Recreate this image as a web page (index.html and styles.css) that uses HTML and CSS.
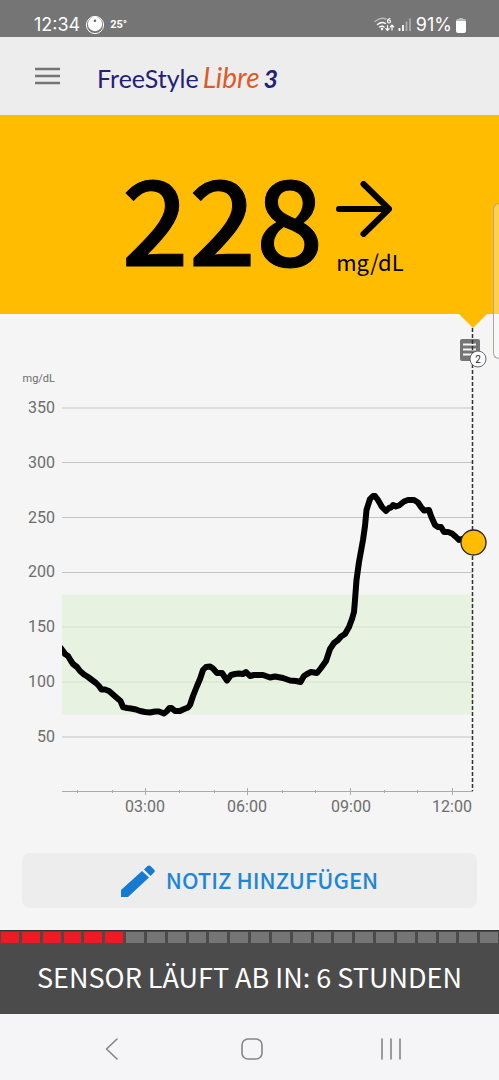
FILE: index.html
```html
<!DOCTYPE html>
<html lang="de">
<head>
<meta charset="utf-8">
<meta name="viewport" content="width=device-width, initial-scale=1">
<title>FreeStyle Libre 3</title>
<link rel="stylesheet" href="styles.css">
</head>
<body>
<div class="status">
  <div class="status-group">
    <span class="clock">12:34</span>
    <svg class="dial" width="20" height="20" viewBox="0 0 20 20" aria-hidden="true"><circle cx="10" cy="10" r="8.6" fill="none" stroke="#fff" stroke-width="1"/><circle cx="10" cy="9" r="7.2" fill="#fff"/><circle cx="10" cy="5.8" r="1.3" fill="#666"/></svg>
    <span class="temp">25°</span>
  </div>
  <div class="status-group status-right">
    <svg width="38" height="16" viewBox="0 0 38 16" aria-hidden="true">
      <g fill="none" stroke="#fff" stroke-linecap="round" stroke-width="1.4"><path d="M1 4.5Q6.500 -.5 12 2" opacity=".5"/><path d="M3.500 7.500Q7.500 4 11.500 6.500"/><path d="M5.500 10Q8 8.500 10 10"/><path d="M13.500 8.500v5m-1.700-1.800 1.700 1.800 1.700-1.800M18 13V8m-1.700 1.800L18 8l1.700 1.800" stroke-width="1.200"/><path d="M16 1.500Q13.500 2 13.500 4.500a1.500 1.500 0 1 0 1.500-1.500" stroke-width="1.200"/></g>
      <circle cx="8" cy="12" r="1.200" fill="#fff"/>
      <path d="M25.500 11v3M29 8v6" stroke="#fff" stroke-width="1.800"/><path d="M32.500 4.500V14M36 1.500V14" stroke="#fff" stroke-width="1.800" opacity=".4"/>
    </svg>
    <span class="clock">91%</span>
    <svg width="10" height="15" viewBox="0 0 10 15" aria-hidden="true"><path d="M3 0h4v1h1.500Q10 1 10 3H0q0-2 1.500-2H3z" fill="#fff" opacity=".5"/><path d="M0 3h10v10q0 2-2 2H2q-2 0-2-2z" fill="#fff"/></svg>
  </div>
</div>
<header class="appbar">
  <button class="menu" aria-label="Menü"><svg width="26" height="18" viewBox="0 0 26 18"><path d="M1 2h25M1 9h25M1 16h25" stroke="#757575" stroke-width="2.500"/></svg></button>
  <h1 class="logo"><span>FreeStyle</span><em class="libre">Libre</em><em class="version">3</em></h1>
</header>
<main>
  <section class="reading">
    <strong class="value">228</strong>
    <div class="trend">
      <svg width="56" height="56" viewBox="0 0 56 56" role="img" aria-label="Gleichbleibend"><path d="M3 28H53M27.500 3 53 28 27.500 53" fill="none" stroke="#000" stroke-width="6" stroke-linecap="round" stroke-linejoin="round"/></svg>
      <span>mg/dL</span>
    </div>
  </section>
  <svg class="chart" viewBox="0 314 499 512" role="img" aria-label="Glukoseverlauf">
    <path d="M459 314h28l-14 14z" fill="#ffbc00"/>
    <path d="M62 408h411M62 462.500h411M62 517.500h411M62 572.500h411M62 627h411M62 682h411M62 737h411" stroke="#c3c3c3"/>
    <path d="M62 594.500h411v120H62z" fill="#e1efd5" opacity=".65"/>
    <path d="M62 791.500h411M145.500 788v7M247.500 788v7M350.500 788v7M452.500 788v7M77.500 790v3M112.500 790v3M179.500 790v3M214.500 790v3M282.500 790v3M315.500 790v3M384.500 790v3M417.500 790v3" stroke="#aaa" fill="none"/>
    <g class="ylabels">
      <text class="unit" x="55" y="382">mg/dL</text>
      <text x="55" y="413">350</text><text x="55" y="468">300</text><text x="55" y="523">250</text><text x="55" y="577">200</text><text x="55" y="632">150</text><text x="55" y="687">100</text><text x="55" y="742">50</text>
    </g>
    <g class="xlabels"><text x="145" y="812">03:00</text><text x="247" y="812">06:00</text><text x="351" y="812">09:00</text><text x="452" y="812">12:00</text></g>
    <g><rect x="460" y="339" width="20" height="22" rx="2" fill="#757575"/><path d="M463 344.500h13M463 349.500h13M463 354.500h9" stroke="#f5f5f5" stroke-width="2"/></g>
    <path d="M472.500 328V791" stroke="#333" stroke-width="1.500" stroke-dasharray="4 2"/>
    <circle cx="478" cy="359" r="8" fill="#fff" stroke="#666"/>
    <text class="count" x="478" y="363">2</text>
    <clipPath id="plot"><path d="M62 400h420v391H62z"/></clipPath>
    <polyline clip-path="url(#plot)" fill="none" stroke="#000" stroke-width="6" stroke-linejoin="round" points="60,647 63,651 65,654 68,656 71,661 73,664 77,667 80,671 84,674.500 88,677 92,680 96,683 99,686 101.500,689.500 105,689.500 109,691 113,694.500 117,698 120.500,701 123,707 127,708 131,708.500 136,709.500 140,711 145,712 150,712.500 155,711.500 159,711.500 164,713.500 167,711 169.500,708 171.500,708 175,711 180,711 183,709.500 188,707.500 190,705 193,696 197,686 200,679 203,670 206,667 210,666.500 213,668.500 217,673 222,673 227,680.500 231,675 235,674 239,673.500 243,674 246,672 250,676 254,675 263,675 270,677.500 275,676.500 283,678 290,680.500 296,681 300.500,682 304,676 307,674 311,672 317,673 321,668 326,661 330,649 334,643 338,640 341,636.500 345,634 349,627 352,619 354,612 355,600 356.500,580 359,562 363,540 365,526 366.500,510 370,499 373,496 375,496 378,500 382,507 386,511 389,508 391,507.500 393,505 396,506.500 399,505.500 404,501.500 408,500 414,500 418,502.500 421,507 424,510.500 429,510 431,516 435,525 438,527 441,527 444,532 448,532 452,533.500 456,537 459,540 465,538 473,542"/>
    <circle cx="473.500" cy="542.500" r="12.500" fill="#ffbc00" stroke="#222" stroke-width="1.300"/>
  </svg>
  <div class="actions">
    <button class="note">
      <svg width="34" height="32" viewBox="0 0 34 32" aria-hidden="true"><path d="M0 25 21 6l7 6.500L7 32H0zM23 4.500 26.500 1Q28 0 29.500 1L33 4.500q1.500 1.500 0 3L29.500 11z" fill="#167bd0"/></svg>
      <span>NOTIZ HINZUFÜGEN</span>
    </button>
  </div>
</main>
<footer class="sensor">
  <div class="segments" aria-hidden="true"><i class="on"></i><i class="on"></i><i class="on"></i><i class="on"></i><i class="on"></i><i class="on"></i><i></i><i></i><i></i><i></i><i></i><i></i><i></i><i></i><i></i><i></i><i></i><i></i><i></i><i></i><i></i><i></i><i></i><i></i></div>
  <p>SENSOR LÄUFT AB IN: 6 STUNDEN</p>
</footer>
<nav class="sysnav">
  <button aria-label="Zurück"><svg width="24" height="24" viewBox="0 0 24 24"><path d="M17 2 6.500 12 17 22"/></svg></button>
  <button aria-label="Start"><svg width="24" height="24" viewBox="0 0 24 24"><rect x="2" y="2" width="20" height="20" rx="6"/></svg></button>
  <button aria-label="Letzte Apps"><svg width="24" height="24" viewBox="0 0 24 24"><path d="M3 2v20M12 2v20M21 2v20"/></svg></button>
</nav>
<div class="edge-handle"></div>
</body>
</html>
```
FILE: styles.css
```css
* { box-sizing: border-box; }
body {
  margin: 0;
  min-height: 100vh;
  position: relative;
  overflow-x: hidden;
  display: flex;
  flex-direction: column;
  background: #f5f5f5;
  font-family: "Noto Sans CJK SC", "Noto Sans", sans-serif;
}
button { border: 0; padding: 0; background: none; font: inherit; display: flex; align-items: center; justify-content: center; }
svg { display: block; flex: none; }

.status {
  display: flex;
  justify-content: space-between;
  height: 37px;
  padding: 12px 33px 0 34px;
  background: #757575;
  color: #fff;
  font-family: Inter, sans-serif;
}
.status-group { display: flex; align-items: center; gap: 5px; height: 26px; }
.status-right { gap: 4px; }
.clock { font-size: 18px; line-height: 26px; }
.temp { font: 700 11px/26px "Roboto", sans-serif; }

.appbar {
  display: flex;
  align-items: center;
  gap: 37px;
  height: 78px;
  padding: 0 34px;
  background: #ededed;
}
.logo { display: flex; align-items: baseline; gap: 4px; margin: 0; padding-top: 3px; font-family: Lato, sans-serif; font-size: 25px; line-height: 40px; font-weight: 400; color: #24207a; }
.logo .libre { color: #dd5a2b; font-size: 28px; }
.logo .version { font-weight: 700; }

.reading {
  display: flex;
  justify-content: center;
  align-items: center;
  gap: 13px;
  height: 199px;
  padding-left: 26px;
  background: #ffbc00;
  color: #000;
}
.value { font-size: 118px; line-height: 176px; font-weight: 500; -webkit-text-stroke: 1px #000; }
.trend { display: flex; flex-direction: column; gap: 8px; padding-top: 28px; }
.trend span { font-size: 22px; line-height: 32px; }

.chart { width: 100%; height: auto; font-family: Roboto, sans-serif; }
.ylabels, .xlabels { font-size: 16px; fill: #6d6d6d; }
.ylabels { text-anchor: end; }
.xlabels, .count { text-anchor: middle; }
.ylabels .unit { font-size: 11px; }
.count { font-size: 10px; fill: #222; }

.actions { padding: 27px 22px 22px; }
.note {
  width: 100%;
  height: 55px;
  gap: 11px;
  border-radius: 8px;
  background: #ededed;
  color: #1d86d6;
  font-size: 22px;
  font-weight: 500;
}
.note span { padding-bottom: 4px; }

.sensor { background: #4b4b4b; color: #fff; border-top: 1px solid #333; }
.segments { display: grid; grid-template-columns: repeat(24, 1fr); gap: 3px; padding: 1px 1px 0; }
.segments i { height: 11px; background: #757575; }
.segments .on { background: #ed1c24; }
.sensor p { margin: 0; padding: 14px 0 18px; text-align: center; font-size: 27px; line-height: 39px; }

.sysnav {
  flex: 1;
  display: flex;
  align-items: center;
  justify-content: space-between;
  min-height: 66px;
  padding: 4px 96px 0 100px;
  background: #f5f5f8;
}
.sysnav svg { fill: none; stroke: #858585; stroke-width: 1.6; stroke-linecap: round; stroke-linejoin: round; }

.edge-handle {
  position: absolute;
  top: 203px;
  right: 0;
  width: 6px;
  height: 156px;
  border: 1px solid #aaa69c;
  border-right: 0;
  border-radius: 6px 0 0 6px;
  background: rgba(255, 255, 255, .3);
}
```
